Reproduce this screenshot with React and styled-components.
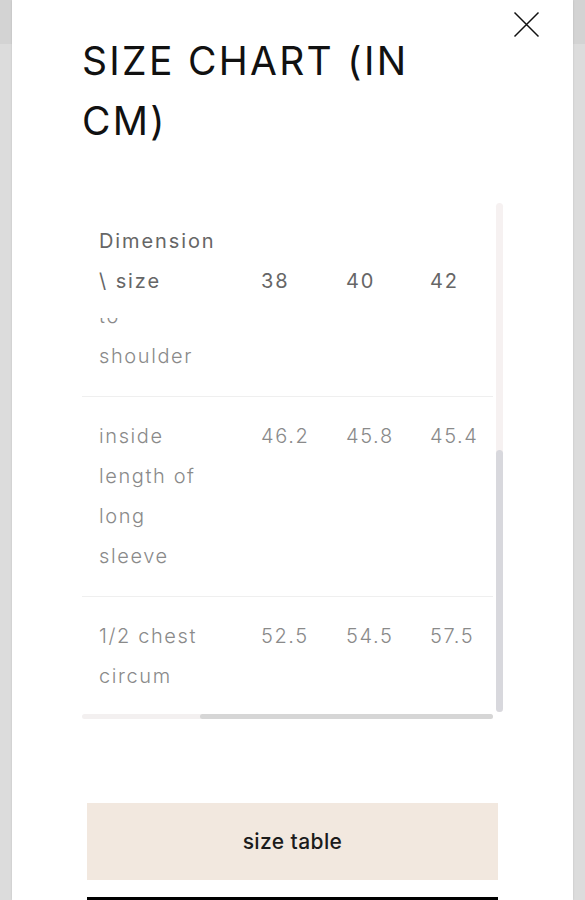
import React from 'react';
import styled, { createGlobalStyle } from 'styled-components';

const Global = createGlobalStyle`
  html, body { margin: 0; padding: 0; background: #dcdcdc; }
  body { font-family: Inter, "Noto Sans", sans-serif; overflow: hidden; }
  * { box-sizing: border-box; }
`;

const Page = styled.div`
  height: 900px;
  overflow: hidden;
  padding: 0 12px 0 12px;
  background: linear-gradient(#d3d3d3 0 44px, #dcdcdc 44px);
`;

const Modal = styled.div`
  position: relative;
  height: 100%;
  background: #fff;
  padding: 31px 0 0 70px;
  box-shadow: 0 0 2px rgba(0, 0, 0, 0.12);
`;

const Close = styled.button`
  position: absolute;
  top: 11px;
  left: 501px;
  width: 27px;
  height: 27px;
  padding: 0;
  border: 0;
  background: transparent;
  display: flex;
`;

const Title = styled.h2`
  margin: 0;
  width: 380px;
  font-size: 39px;
  line-height: 60px;
  font-weight: 400;
  letter-spacing: 2.3px;
  color: #111;
`;

const TableFrame = styled.div`
  position: relative;
  margin-top: 52px;
  width: 421px;
  height: 517px;
`;

const Viewport = styled.div`
  width: 411px;
  height: 509px;
  overflow: hidden;
  display: flex;
  flex-direction: column;
`;

const Row = styled.div`
  display: grid;
  grid-template-columns: 162px 85px 84px 85px;
  align-items: ${(p) => (p.$head ? 'end' : 'start')};
  padding: ${(p) => (p.$head ? '18px 0 17px' : '19px 0 20px')};
  background: #fff;
  border-bottom: ${(p) => (p.$head ? 'none' : '1.5px solid #efefef')};
  font-size: 20px;
  line-height: 40px;
  letter-spacing: ${(p) => (p.$head ? '1.9px' : '1.6px')};
  color: ${(p) => (p.$head ? '#666' : '#8a8a8a')};
  font-weight: ${(p) => (p.$head ? 400 : 300)};
  flex: none;
`;

const BodyClip = styled.div`
  flex: 1;
  overflow: hidden;
`;

const Body = styled.div`
  margin-top: -41px;
`;

const Cell = styled.div`
  padding: 0 ${(p) => (p.$first ? '34px' : '0')} 0 17px;
`;

const VTrack = styled.div`
  position: absolute;
  left: 414px;
  top: 0;
  width: 7px;
  height: 509px;
  border-radius: 4px;
  background: #f6f1f1;
`;

const VThumb = styled.div`
  position: absolute;
  left: 0;
  top: 247px;
  width: 7px;
  height: 262px;
  border-radius: 4px;
  background: #d8d8dd;
`;

const HTrack = styled.div`
  position: absolute;
  left: 0;
  top: 511px;
  width: 411px;
  height: 5px;
  border-radius: 3px;
  background: #f3f0f0;
`;

const HThumb = styled.div`
  position: absolute;
  left: 118px;
  top: 0;
  width: 293px;
  height: 5px;
  border-radius: 3px;
  background: #d6d6d6;
`;

const Actions = styled.div`
  margin: 83px 0 0 5px;
  width: 411px;
  display: flex;
  flex-direction: column;
  gap: 17px;
`;

const Button = styled.button`
  width: 411px;
  height: ${(p) => (p.$dark ? '60px' : '77px')};
  border: 0;
  padding: 0;
  background: ${(p) => (p.$dark ? '#000' : '#f2e8df')};
  color: ${(p) => (p.$dark ? '#fff' : '#1b1b1b')};
  font-family: inherit;
  font-size: 21px;
  font-weight: 500;
  letter-spacing: 0.4px;
`;

const rows = [
  { name: 'to shoulder', v: ['', '', ''] },
  { name: 'inside length of long sleeve', v: ['46.2', '45.8', '45.4'] },
  { name: '1/2 chest circum', v: ['52.5', '54.5', '57.5'] },
];

export default function App() {
  return (
    <>
      <Global />
      <Page>
        <Modal>
          <Close aria-label="close">
            <svg width="27" height="27" viewBox="0 0 27 27">
              <path d="M1.5 1.5 L25.5 25.5 M25.5 1.5 L1.5 25.5" stroke="#111" strokeWidth="1.5" fill="none" />
            </svg>
          </Close>
          <Title>SIZE CHART (IN CM)</Title>
          <TableFrame>
            <Viewport>
              <Row $head>
                <Cell $first>Dimension \ size</Cell>
                <Cell>38</Cell>
                <Cell>40</Cell>
                <Cell>42</Cell>
              </Row>
              <BodyClip>
                <Body>
                  {rows.map((r) => (
                    <Row key={r.name}>
                      <Cell $first>{r.name}</Cell>
                      {r.v.map((x, i) => (
                        <Cell key={i}>{x}</Cell>
                      ))}
                    </Row>
                  ))}
                </Body>
              </BodyClip>
            </Viewport>
            <VTrack>
              <VThumb />
            </VTrack>
            <HTrack>
              <HThumb />
            </HTrack>
          </TableFrame>
          <Actions>
            <Button>size table</Button>
            <Button $dark aria-label="how to measure" />
          </Actions>
        </Modal>
      </Page>
    </>
  );
}
